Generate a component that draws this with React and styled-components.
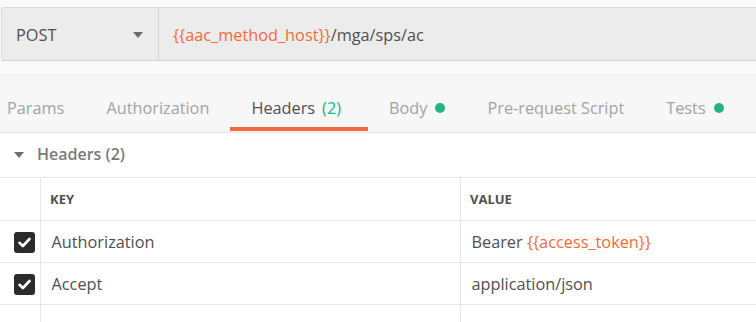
import React from "react";
import styled, { createGlobalStyle } from "styled-components";

const Global = createGlobalStyle`
  html, body { margin: 0; padding: 0; background: #ffffff; }
  body { font-family: "Open Sans", "Noto Sans", sans-serif; color: #505050; }
`;

const Page = styled.div`
  width: 756px;
  height: 322px;
  overflow: hidden;
  background: #ffffff;
`;

const UrlArea = styled.div`
  background: #f9f9f9;
  padding: 7px 0 14px 1px;
`;

const InputGroup = styled.div`
  display: flex;
  height: 52px;
  background: #ececec;
  border: 1px solid #d9d9d9;
  border-right: none;
  border-bottom-color: #d2d2d2;
  border-radius: 3px 0 0 3px;
`;

const MethodSelect = styled.div`
  flex: none;
  display: flex;
  align-items: center;
  justify-content: space-between;
  padding: 1px 15px 0 14px;
  width: 127px;
  border-right: 1px solid #d6d6d6;
  font-size: 16.3px;
  color: #505050;
`;

const Caret = styled.span`
  width: 0;
  height: 0;
  border-left: 5px solid transparent;
  border-right: 5px solid transparent;
  border-top: 6px solid #6b6b6b;
`;

const UrlText = styled.div`
  display: flex;
  align-items: center;
  padding: 1px 0 0 14px;
  font-size: 16.3px;
  color: #505050;
  white-space: nowrap;
`;

const Var = styled.span`
  color: #f26b3a;
`;

const TabBar = styled.div`
  display: flex;
  height: 56px;
  background: #f7f7f7;
  border-top: 1px solid #efefef;
  border-bottom: 1px solid #e4e4e4;
  overflow: hidden;
`;

const TabList = styled.div`
  display: flex;
  margin-left: -14px;
`;

const Tab = styled.div`
  display: flex;
  align-items: center;
  padding: 12px ${(p) => (p.$active ? 27 : 21)}px 0 21px;
  font-size: 16.3px;
  white-space: nowrap;
  color: ${(p) => (p.$active ? "#505050" : "#a3a3a3")};
  border-bottom: 4px solid ${(p) => (p.$active ? "#f26b3a" : "transparent")};
  margin-bottom: 1px;
`;

const Count = styled.span`
  color: #26b47f;
  margin-left: 7px;
`;

const Dot = styled.span`
  width: 10px;
  height: 10px;
  border-radius: 50%;
  background: #26b47f;
  margin-left: 8px;
  margin-top: 1px;
`;

const SectionHeader = styled.div`
  display: flex;
  align-items: center;
  height: 42px;
  padding: 0 0 2px 14px;
  font-size: 16px;
  font-weight: 600;
  color: #7a7a7a;
  gap: 13px;
`;

const SectionCaret = styled.span`
  width: 0;
  height: 0;
  border-left: 5px solid transparent;
  border-right: 5px solid transparent;
  border-top: 6px solid #707070;
  margin-top: 1px;
`;

const Table = styled.div`
  display: grid;
  grid-template-columns: 41px 420px 1fr;
  border-top: 1px solid #e6e6e6;
`;

const Cell = styled.div`
  display: flex;
  align-items: center;
  height: ${(p) => (p.$head ? 42 : 41)}px;
  border-bottom: 1px solid #e6e6e6;
  border-right: ${(p) => (p.$last ? "none" : "1px solid #e6e6e6")};
  padding-left: ${(p) => (p.$check ? 14 : p.$head ? 9 : 10.5)}px;
  font-size: ${(p) => (p.$head ? 13 : 16.3)}px;
  font-weight: ${(p) => (p.$head ? 700 : 400)};
  color: ${(p) => (p.$placeholder ? "#c4c4c4" : "#505050")};
  white-space: nowrap;
  overflow: hidden;
`;

const PlaceholderCell = styled(Cell)`
  align-items: flex-start;
  padding-top: 23px;
  height: 60px;
  box-sizing: border-box;
`;

const Checkbox = styled.span`
  width: 21px;
  height: 21px;
  border-radius: 3px;
  background: #2b2b2b;
  display: flex;
  align-items: center;
  justify-content: center;
  margin-top: 1px;
`;

const Check = () => (
  <svg width="13" height="11" viewBox="0 0 13 11">
    <path d="M1.5 5.8 L4.9 9 L11.5 2" fill="none" stroke="#ffffff" strokeWidth="2.6" strokeLinecap="round" strokeLinejoin="round" />
  </svg>
);

const rows = [
  { key: "Authorization", value: (<span>Bearer <Var>{"{{access_token}}"}</Var></span>) },
  { key: "Accept", value: "application/json" },
];

export default function App() {
  return (
    <Page>
      <Global />
      <UrlArea>
        <InputGroup>
          <MethodSelect>
            POST
            <Caret />
          </MethodSelect>
          <UrlText>
            <Var>{"{{aac_method_host}}"}</Var>/mga/sps/ac
          </UrlText>
        </InputGroup>
      </UrlArea>
      <TabBar>
        <TabList>
          <Tab>Params</Tab>
          <Tab>Authorization</Tab>
          <Tab $active>
            Headers<Count>(2)</Count>
          </Tab>
          <Tab>
            Body<Dot />
          </Tab>
          <Tab>Pre-request Script</Tab>
          <Tab>
            Tests<Dot />
          </Tab>
        </TabList>
      </TabBar>
      <SectionHeader>
        <SectionCaret />
        Headers (2)
      </SectionHeader>
      <Table>
        <Cell $head $check />
        <Cell $head>KEY</Cell>
        <Cell $head $last>VALUE</Cell>
        {rows.map((r) => (
          <React.Fragment key={r.key}>
            <Cell $check>
              <Checkbox>
                <Check />
              </Checkbox>
            </Cell>
            <Cell>{r.key}</Cell>
            <Cell $last>{r.value}</Cell>
          </React.Fragment>
        ))}
        <PlaceholderCell $check />
        <PlaceholderCell $placeholder>Key</PlaceholderCell>
        <PlaceholderCell $placeholder $last>Value</PlaceholderCell>
      </Table>
    </Page>
  );
}
